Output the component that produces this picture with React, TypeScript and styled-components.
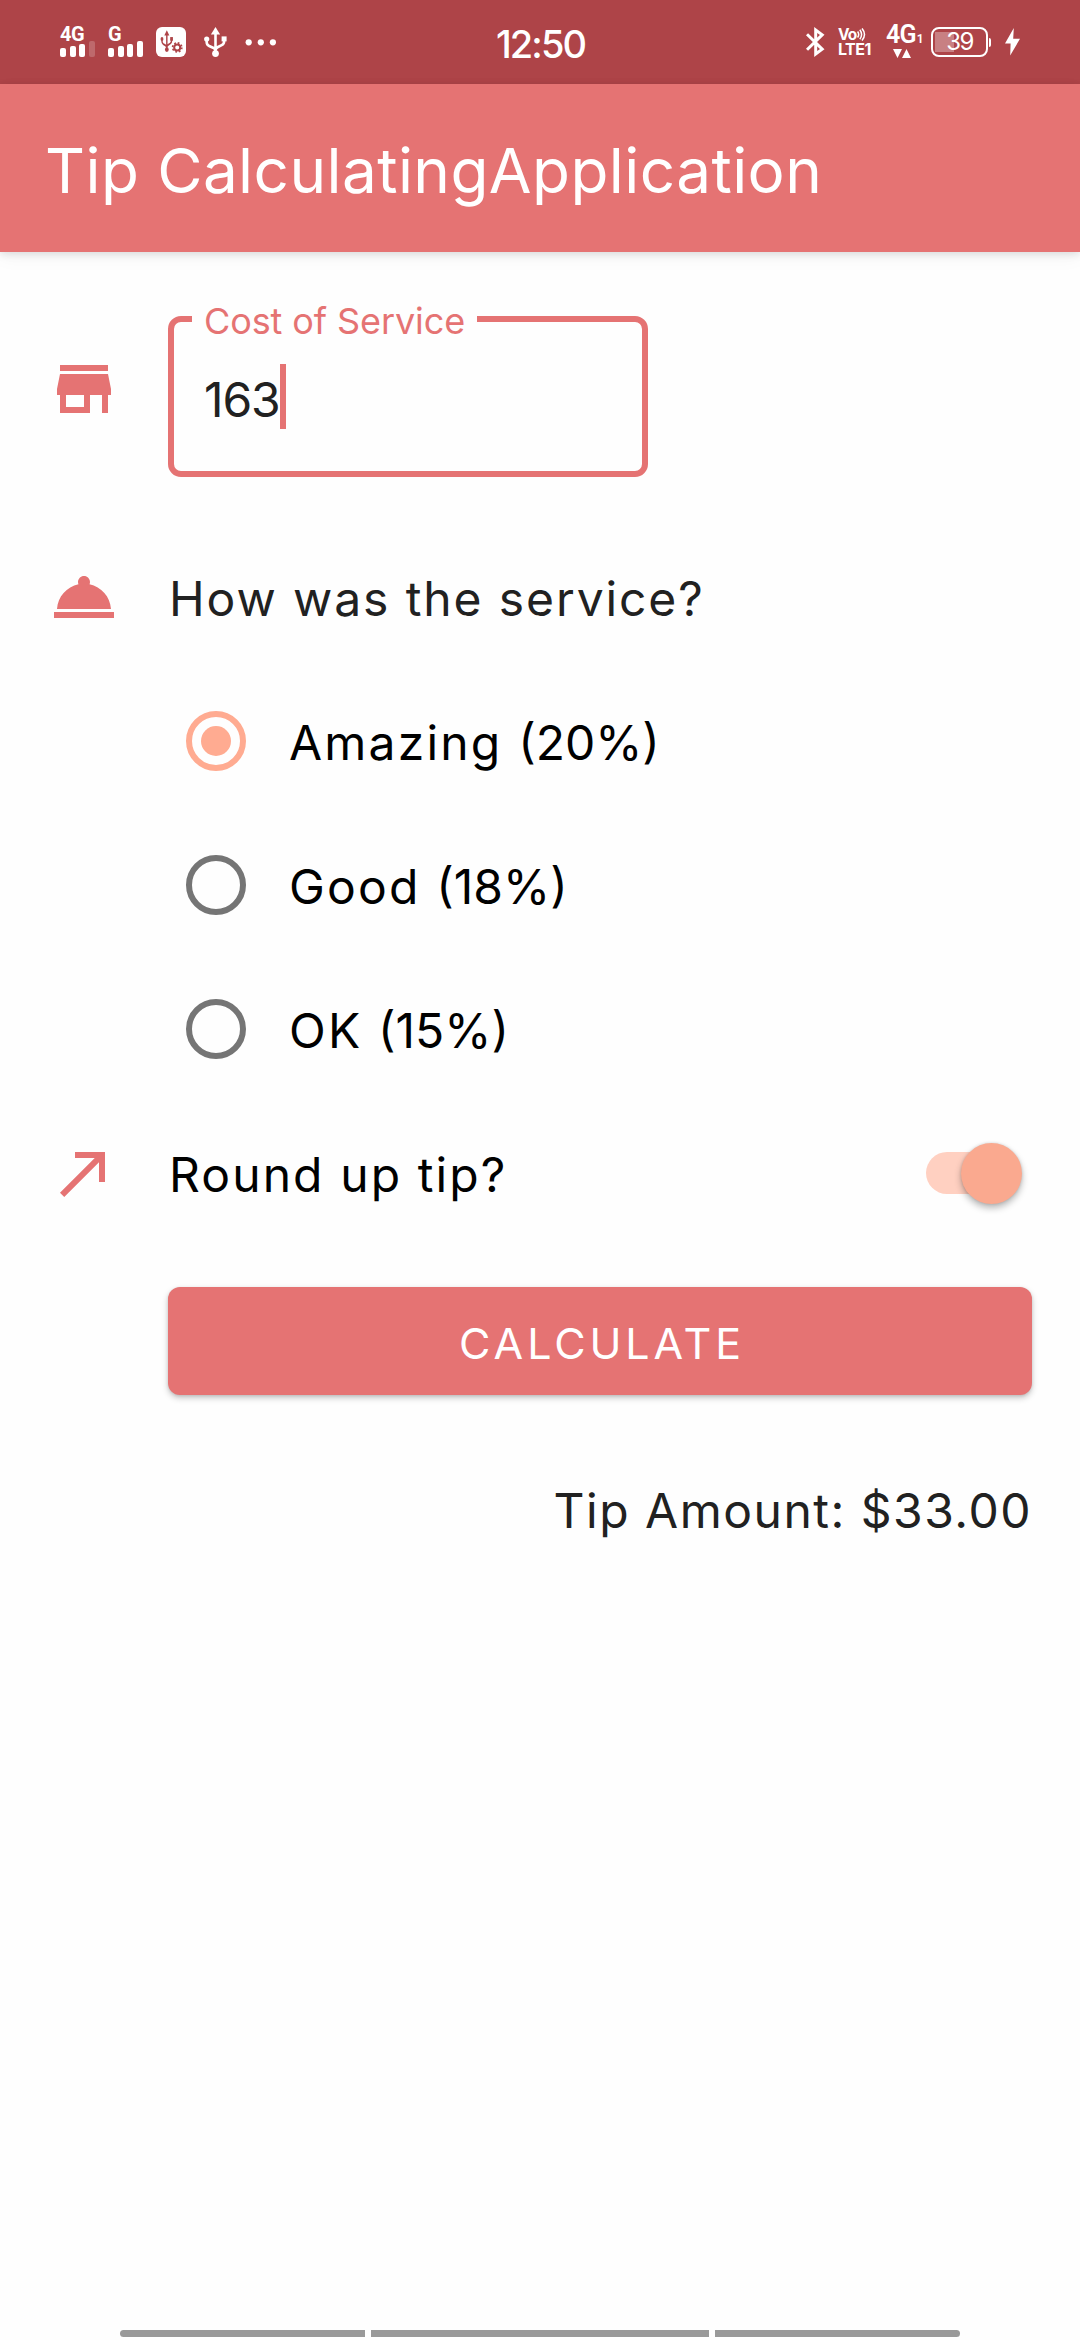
import React from "react";
import styled, { createGlobalStyle } from "styled-components";

const colors = {
  status: "#ae4448",
  primary: "#e57373",
  accent: "#ffab91",
  background: "#fefefe",
  ink: "#212121",
};

const GlobalStyle = createGlobalStyle`
  * { box-sizing: border-box; }
  body { margin: 0; background: ${colors.background}; }
`;

const Page = styled.div`
  display: flex;
  flex-direction: column;
  width: 1080px;
  height: 2340px;
  overflow: hidden;
  background: ${colors.background};
  font-family: Inter, Roboto, "Liberation Sans", sans-serif;
`;

const StatusBar = styled.header`
  display: grid;
  grid-template-columns: 1fr auto 1fr;
  align-items: center;
  height: 84px;
  padding: 0 60px;
  background: ${colors.status};
  color: #fff;
`;

const StatusGroup = styled.div<{ $end?: boolean }>`
  display: flex;
  align-items: center;
  justify-content: ${(p) => (p.$end ? "flex-end" : "flex-start")};
  height: 30px;
`;

const Clock = styled.time`
  padding: 4px 0 0 1px;
  font-size: 38px;
  font-weight: 500;
  line-height: 46px;
  letter-spacing: -1.9px;
`;

const Signal = styled.div`
  display: flex;
  flex-direction: column;
  justify-content: space-between;
  width: 35px;
  height: 30px;
  margin-right: 13px;
`;

const SignalLabel = styled.span`
  font-family: Roboto, sans-serif;
  font-size: 20px;
  font-weight: 700;
  line-height: 14px;
  letter-spacing: -0.5px;
`;

const Bars = styled.div`
  display: flex;
  align-items: flex-end;
  justify-content: space-between;
  height: 16px;
`;

const Bar = styled.i<{ $height: number; $faint?: boolean }>`
  width: 6px;
  height: ${(p) => p.$height}px;
  border-radius: 2px;
  background: ${(p) => (p.$faint ? "rgba(255,255,255,.2)" : "#fff")};
`;

const Glyph = styled.svg<{ $gap?: number }>`
  display: block;
  flex: none;
  margin-left: ${(p) => p.$gap ?? 0}px;
`;

const Volte = styled.div`
  display: flex;
  flex-direction: column;
  width: 34px;
  height: 28px;
  margin-left: 13px;
  font-weight: 700;
`;

const VolteTop = styled.div`
  display: flex;
  align-items: center;
  height: 13px;
  font-size: 15.5px;
  line-height: 13px;
  letter-spacing: -0.8px;
`;

const VolteBottom = styled.div`
  height: 15px;
  font-size: 16px;
  line-height: 17px;
  letter-spacing: -0.5px;
`;

const Network = styled.div`
  display: flex;
  flex-direction: column;
  justify-content: space-between;
  width: 35px;
  height: 32px;
  margin-left: 14px;
`;

const NetworkLabel = styled.div`
  display: flex;
  align-items: flex-end;
  gap: 1px;
  height: 18px;
  font-family: Roboto, sans-serif;
  font-size: 25px;
  font-weight: 600;
  line-height: 18px;
  letter-spacing: -0.8px;
`;

const NetworkIndex = styled.span`
  font-size: 12px;
  line-height: 9px;
`;

const Battery = styled.div`
  display: flex;
  align-items: center;
  margin-left: 10px;
`;

const BatteryShell = styled.div`
  display: flex;
  align-items: center;
  justify-content: center;
  width: 57px;
  height: 30px;
  border: 2px solid #fff;
  border-radius: 8px;
  background: linear-gradient(rgba(255, 255, 255, 0.32), rgba(255, 255, 255, 0.32)) 2px center / 19px 20px no-repeat;
  font-size: 24px;
  line-height: 26px;
  letter-spacing: -1.5px;
`;

const BatteryTip = styled.i`
  width: 2px;
  height: 9px;
  margin-left: 1px;
  border-radius: 0 2px 2px 0;
  background: #fff;
`;

const AppBar = styled.div`
  display: flex;
  align-items: center;
  flex: none;
  height: 168px;
  padding: 6px 45px 0;
  background: ${colors.primary};
  box-shadow: 0 2px 8px rgba(0, 0, 0, 0.12), 0 6px 18px rgba(0, 0, 0, 0.04);
  z-index: 1;
`;

const Title = styled.h1`
  margin: 0;
  color: #fff;
  font-size: 62px;
  font-weight: 400;
  line-height: 76px;
  letter-spacing: 0.43px;
  white-space: nowrap;
`;

const Form = styled.main`
  display: flex;
  flex-direction: column;
  padding: 49px 48px 0;
`;

const Row = styled.div<{ $height: number; $top?: number }>`
  display: grid;
  grid-template-columns: 72px 1fr auto;
  column-gap: 48px;
  align-items: center;
  height: ${(p) => p.$height}px;
  margin-top: ${(p) => p.$top ?? 0}px;
`;

const Icon = styled.svg`
  display: block;
  width: 72px;
  height: 72px;
  fill: ${colors.primary};
`;

const Text = styled.span<{ $spacing?: number; $color?: string; $indent?: number }>`
  padding: 4px 0 0 ${(p) => p.$indent ?? 0}px;
  color: ${(p) => p.$color ?? "#000"};
  font-size: 48px;
  font-weight: 400;
  line-height: 60px;
  letter-spacing: ${(p) => p.$spacing ?? 1.5}px;
  white-space: nowrap;
`;

const Rate = styled.span`
  letter-spacing: 0;
`;

const Field = styled.div`
  position: relative;
  display: flex;
  align-items: center;
  align-self: end;
  width: 480px;
  height: 161px;
  padding: 0 30px;
  border: 6px solid ${colors.primary};
  border-radius: 13px;
`;

const FieldLabel = styled.label`
  position: absolute;
  top: -19px;
  left: 18px;
  width: 285px;
  padding-left: 12px;
  background: ${colors.background};
  color: ${colors.primary};
  font-size: 36px;
  line-height: 36px;
  letter-spacing: -0.1px;
  white-space: nowrap;
`;

const FieldValue = styled.span`
  padding-top: 6px;
  color: ${colors.ink};
  font-size: 48px;
  line-height: 65px;
  letter-spacing: -1.1px;
`;

const Caret = styled.i`
  width: 6px;
  height: 65px;
  background: ${colors.primary};
`;

const Options = styled.div`
  display: flex;
  flex-direction: column;
  margin: 36px 0 0 138px;
`;

const Option = styled.label`
  display: flex;
  align-items: center;
  gap: 42px;
  height: 144px;
`;

const Radio = styled.span<{ $checked?: boolean }>`
  display: grid;
  place-items: center;
  width: 60px;
  height: 60px;
  border: 6px solid ${(p) => (p.$checked ? colors.accent : "#757575")};
  border-radius: 50%;

  &::after {
    content: "";
    width: 30px;
    height: 30px;
    border-radius: 50%;
    background: ${(p) => (p.$checked ? colors.accent : "transparent")};
  }
`;

const Track = styled.span`
  display: flex;
  align-items: center;
  justify-content: flex-end;
  width: 90px;
  height: 42px;
  margin-right: 16px;
  border-radius: 21px;
  background: #ffd0c1;
`;

const Thumb = styled.span`
  flex: none;
  width: 61px;
  height: 61px;
  margin-right: -6px;
  border-radius: 50%;
  background: #faa98f;
  box-shadow: 0 4px 7px rgba(0, 0, 0, 0.28), 0 0 3px rgba(0, 0, 0, 0.14);
`;

const Button = styled.button`
  height: 108px;
  margin: 42px 0 0 120px;
  padding: 4px 0 0 4px;
  border: 0;
  border-radius: 12px;
  background: ${colors.primary};
  box-shadow: 0 3px 6px rgba(0, 0, 0, 0.22), 0 1px 3px rgba(0, 0, 0, 0.1);
  color: #fff;
  font-family: inherit;
  font-size: 43px;
  font-weight: 400;
  letter-spacing: 3.9px;
`;

const Result = styled.div`
  display: flex;
  justify-content: flex-end;
  margin-top: 82px;
`;

const NavHandles = styled.footer`
  display: flex;
  justify-content: center;
  gap: 6px;
  margin-top: auto;
  padding-bottom: 3px;
`;

const Handle = styled.i<{ $width: number; $side?: "left" | "right" }>`
  width: ${(p) => p.$width}px;
  height: 7px;
  border-radius: ${(p) => (p.$side === "left" ? "4px 0 0 4px" : p.$side === "right" ? "0 4px 4px 0" : "0")};
  background: #999;
`;

const BAR_HEIGHTS = [9, 11, 13, 16];

function SignalMeter({ label, weak }: { label: string; weak?: boolean }) {
  return (
    <Signal>
      <SignalLabel>{label}</SignalLabel>
      <Bars>
        {BAR_HEIGHTS.map((h, i) => (
          <Bar key={h} $height={h} $faint={weak && i === 3} />
        ))}
      </Bars>
    </Signal>
  );
}

function Trident({ color }: { color: string }) {
  return (
    <g fill={color} stroke="none">
      <path d="M11.5 0l4.6 7.4H6.9z" />
      <circle cx="11.5" cy="26.6" r="3.4" />
      <circle cx="2.7" cy="12" r="2.6" />
      <path d="M17.6 9.4h5v5h-5z" />
      <path
        d="M11.5 6v19M2.7 12v3.2q0 2.6 2.5 3.8l3.8 1.7q2.5 1.2 2.5 3.3M20.1 12v2.6q0 2.4-2.4 3.6l-3.7 1.8q-2.5 1.2-2.5 3.4"
        fill="none"
        stroke={color}
        strokeWidth="2.6"
      />
    </g>
  );
}

const OPTIONS = [
  { name: "Amazing", rate: "(20%)" },
  { name: "Good", rate: "(18%)" },
  { name: "OK", rate: "(15%)" },
];

export default function App() {
  return (
    <Page>
      <GlobalStyle />
      <StatusBar>
        <StatusGroup>
          <SignalMeter label="4G" weak />
          <SignalMeter label="G" />
          <Glyph width="30" height="30" viewBox="0 0 30 30">
            <rect width="30" height="30" rx="6" fill="#fff" />
            <g transform="translate(4.5 3.2) scale(.55 .73)">
              <Trident color={colors.status} />
            </g>
            <circle cx="21.2" cy="20.4" r="6.6" fill="#fff" />
            <circle cx="21.2" cy="20.4" r="3" fill="none" stroke={colors.status} strokeWidth="2" />
            <circle
              cx="21.2"
              cy="20.4"
              r="4.6"
              fill="none"
              stroke={colors.status}
              strokeWidth="1.7"
              strokeDasharray="1.8 1.81"
            />
          </Glyph>
          <Glyph $gap={18} width="23" height="30" viewBox="0 0 23 30">
            <Trident color="#fff" />
          </Glyph>
          <Glyph $gap={18} width="32" height="8" viewBox="0 0 32 8" fill="#fff">
            <circle cx="3.7" cy="4.3" r="3.1" />
            <circle cx="15.8" cy="4.3" r="3.1" />
            <circle cx="27.9" cy="4.3" r="3.1" />
          </Glyph>
        </StatusGroup>
        <Clock>12:50</Clock>
        <StatusGroup $end>
          <Glyph width="19" height="30" viewBox="0 0 19 30" fill="none" stroke="#fff" strokeWidth="3">
            <path d="M1 7.2l15.2 15L9.7 27V3l6.5 4.8L1 22.8" />
          </Glyph>
          <Volte>
            <VolteTop>
              Vo
              <Glyph width="9" height="13" viewBox="0 0 9 13" fill="none" stroke="#fff" strokeWidth="1.5">
                <path d="M0.6 3.5q2.2 3 0 6M2.8 1.8q3.6 4.7 0 9.4M5 .4q5 6 0 12" />
              </Glyph>
            </VolteTop>
            <VolteBottom>LTE1</VolteBottom>
          </Volte>
          <Network>
            <NetworkLabel>
              4G
              <NetworkIndex>1</NetworkIndex>
            </NetworkLabel>
            <Glyph $gap={7} width="18" height="9" viewBox="0 0 18 9" fill="#fff">
              <path d="M0 0h9L4.5 9zM9 9h9L13.5 0z" />
            </Glyph>
          </Network>
          <Battery>
            <BatteryShell>39</BatteryShell>
            <BatteryTip />
          </Battery>
          <Glyph $gap={14} width="15" height="28" viewBox="0 0 15 28" fill="#fff">
            <path d="M8.8 0L0 15.4h5.6L5.2 27.5 15 10.8H8.2z" />
          </Glyph>
        </StatusGroup>
      </StatusBar>

      <AppBar>
        <Title>Tip CalculatingApplication</Title>
      </AppBar>

      <Form>
        <Row $height={176}>
          <Icon viewBox="0 0 24 24">
            <path d="M20 4H4v2h16V4zm1 10v-2l-1-5H4l-1 5v2h1v6h10v-6h4v6h2v-6h1zm-9 4H6v-4h6v4z" />
          </Icon>
          <Field>
            <FieldLabel>Cost of Service</FieldLabel>
            <FieldValue>163</FieldValue>
            <Caret />
          </Field>
        </Row>

        <Row $height={72} $top={84}>
          <Icon viewBox="0 0 24 24">
            <path d="M2 17h20v2H2zm11.84-9.21c.1-.24.16-.51.16-.79 0-1.1-.9-2-2-2s-2 .9-2 2c0 .28.06.55.16.79C6.25 8.6 3.27 11.93 3 16h18c-.27-4.07-3.25-7.4-7.16-8.21z" />
          </Icon>
          <Text $color={colors.ink} $spacing={1.9} $indent={1}>
            How was the service?
          </Text>
        </Row>

        <Options>
          {OPTIONS.map(({ name, rate }, i) => (
            <Option key={name}>
              <Radio $checked={i === 0} />
              <Text $spacing={2.2} $indent={1}>
                {name} <Rate>{rate}</Rate>
              </Text>
            </Option>
          ))}
        </Options>

        <Row $height={144}>
          <Icon viewBox="0 0 24 24">
            <path d="M9 5v2h6.59L4 18.59 5.41 20 17 8.41V15h2V5z" />
          </Icon>
          <Text $spacing={2.1} $indent={1}>
            Round up tip?
          </Text>
          <Track>
            <Thumb />
          </Track>
        </Row>

        <Button>CALCULATE</Button>

        <Result>
          <Text $color={colors.ink}>Tip Amount: $33.00</Text>
        </Result>
      </Form>

      <NavHandles>
        <Handle $width={245} $side="left" />
        <Handle $width={338} />
        <Handle $width={245} $side="right" />
      </NavHandles>
    </Page>
  );
}
